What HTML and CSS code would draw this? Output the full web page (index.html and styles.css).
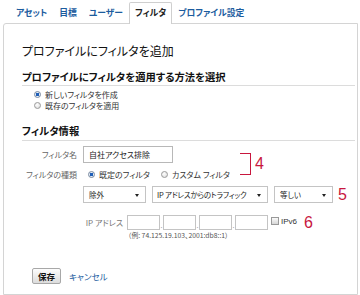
FILE: index.html
```html
<!DOCTYPE html>
<html lang="ja">
<head>
    <meta charset="UTF-8">
    <meta name="viewport" content="width=device-width, initial-scale=1.0">
    <title>プロファイルにフィルタを追加</title>
    <link rel="stylesheet" href="styles.css">
</head>
<body>
    <div class="tabs">
        <a class="tab">アセット</a>
        <a class="tab">目標</a>
        <a class="tab">ユーザー</a>
        <a class="tab active">フィルタ</a>
        <a class="tab">プロファイル設定</a>
    </div>

    <div class="panel">
        <h1 class="title">プロファイルにフィルタを追加</h1>

        <h2 class="section">プロファイルにフィルタを適用する方法を選択</h2>
        <div class="radio-list">
            <div class="radio-row"><span class="radio checked"></span>新しいフィルタを作成</div>
            <div class="radio-row"><span class="radio"></span>既存のフィルタを適用</div>
        </div>

        <h2 class="section second">フィルタ情報</h2>
        <div class="form">
            <div class="row name-row">
                <div class="label">フィルタ名</div>
                <div class="textbox name-box">自社アクセス排除</div>
            </div>
            <div class="row type-row">
                <div class="label">フィルタの種類</div>
                <div class="type-options">
                    <span class="radio checked"></span>既定のフィルタ
                    <span class="radio gap"></span>カスタム フィルタ
                </div>
            </div>
            <div class="bracket"></div>
            <div class="mark mark-4">4</div>
            <div class="row select-row">
                <div class="label"></div>
                <div class="select sel-type"><span>除外</span><i class="arrow"></i></div>
                <div class="select sel-field"><span>IP アドレスからのトラフィック</span><i class="arrow"></i></div>
                <div class="select sel-match"><span>等しい</span><i class="arrow"></i></div>
                <div class="mark">5</div>
            </div>
            <div class="row ip-row">
                <div class="label"></div>
                <div class="ip-label">IP アドレス</div>
                <div class="ip-box"></div><span class="dot">.</span>
                <div class="ip-box"></div><span class="dot">.</span>
                <div class="ip-box"></div><span class="dot">.</span>
                <div class="ip-box"></div>
                <span class="checkbox"></span><span class="ipv6">IPv6</span>
                <div class="mark mark-6">6</div>
            </div>
            <div class="example">（例: 74.125.19.103、2001:db8::1）</div>
        </div>

        <div class="actions">
            <button class="save">保存</button>
            <a class="cancel">キャンセル</a>
        </div>
    </div>
</body>
</html>
```

FILE: styles.css
```css
body {
    margin: 0;
    background-color: #fff;
    font-family: "Noto Sans CJK JP", "Liberation Sans", sans-serif;
    font-feature-settings: "palt";
    color: #222;
}
.tabs {
    display: flex;
    align-items: flex-end;
    height: 23px;
    padding-left: 10px;
}
.tab {
    padding: 0 5px;
    height: 20px;
    line-height: 20px;
    font-size: 8.8px;
    font-weight: bold;
    color: #1c5c9e;
    border: 1px solid transparent;
    border-bottom: none;
}
.tab.active {
    background-color: #fff;
    border-color: #cfcfcf;
    border-radius: 2px 2px 0 0;
    color: #222;
    position: relative;
    margin-bottom: -1px;
    height: 21px;
}
.panel {
    box-sizing: border-box;
    margin: 0 2px 0 3px;
    height: 272px;
    border: 1px solid #d4d4d4;
    border-radius: 3px 0 0 0;
    padding: 19px 2px 0 18px;
}
.title {
    margin: 0;
    font-size: 12px;
    line-height: 16px;
    font-weight: normal;
    color: #111;
}
.section {
    margin: 11px 0 0;
    padding-bottom: 1px;
    font-size: 10.3px;
    line-height: 14px;
    font-weight: bold;
    color: #111;
    border-bottom: 1px solid #dcdcdc;
}
.section.second {
    margin-top: 13px;
    padding-bottom: 2px;
}
.radio-list {
    margin-top: 3px;
    padding-left: 12px;
}
.radio-row {
    display: flex;
    align-items: center;
    height: 11px;
    font-size: 8px;
    color: #333;
}
.radio {
    display: inline-block;
    box-sizing: border-box;
    width: 7px;
    height: 7px;
    margin-right: 4px;
    border: 1px solid #9a9a9a;
    border-radius: 50%;
    background: radial-gradient(circle at 40% 35%, #fff, #d8d8d8);
}
.radio.checked {
    background: radial-gradient(circle, #1f5fb8 0, #1f5fb8 1.5px, #e4ecf6 2px, #cfd8e4 100%);
    border-color: #7a8aa0;
}
.form {
    position: relative;
    margin-top: 5px;
}
.row {
    display: flex;
    align-items: center;
}
.label {
    width: 55px;
    margin-right: 6px;
    text-align: right;
    font-size: 8px;
    color: #666;
    flex-shrink: 0;
}
.name-row {
    height: 17px;
}
.textbox {
    box-sizing: border-box;
    height: 17px;
    border: 1px solid #b8b8b8;
    background-color: #fff;
    font-size: 8px;
    line-height: 15px;
    padding-left: 5px;
    color: #222;
}
.name-box {
    width: 90px;
}
.type-row {
    margin-top: 4px;
    height: 14px;
}
.type-options {
    display: flex;
    align-items: center;
    padding-left: 5px;
    font-size: 8px;
    color: #333;
}
.type-options .radio.gap {
    margin-left: 11px;
}
.bracket {
    position: absolute;
    left: 218px;
    top: 7px;
    width: 10px;
    height: 20px;
    border: 1.5px solid #c8173e;
    border-left: none;
}
.mark {
    font-family: "Liberation Sans", sans-serif;
    font-size: 16px;
    line-height: 16px;
    color: #c8173e;
    margin-left: 5px;
}
.mark-4 {
    position: absolute;
    left: 228px;
    top: 10px;
    margin-left: 5px;
}
.select-row {
    margin-top: 5px;
    height: 17px;
}
.select {
    box-sizing: border-box;
    display: flex;
    align-items: center;
    justify-content: space-between;
    height: 17px;
    padding: 0 6px 0 5px;
    margin-right: 6px;
    border: 1px solid #c4c4c4;
    background-color: #fff;
    font-size: 7.5px;
    color: #222;
    white-space: nowrap;
}
.sel-type {
    width: 63px;
}
.sel-field {
    width: 116px;
    padding-left: 4px;
    letter-spacing: -0.2px;
}
.sel-match {
    width: 59px;
    margin-right: 0;
}
.arrow {
    width: 0;
    height: 0;
    border-left: 2.5px solid transparent;
    border-right: 2.5px solid transparent;
    border-top: 3px solid #222;
    margin-top: 2px;
}
.ip-row {
    margin-top: 12px;
    height: 15px;
}
.ip-label {
    width: 40px;
    margin-right: 4px;
    text-align: right;
    font-size: 8px;
    color: #777;
    flex-shrink: 0;
}
.ip-box {
    box-sizing: border-box;
    width: 33px;
    height: 15px;
    border: 1px solid #c4c4c4;
}
.dot {
    width: 3px;
    align-self: flex-end;
    font-size: 7px;
    line-height: 9px;
    color: #999;
    text-align: center;
}
.checkbox {
    box-sizing: border-box;
    width: 8px;
    height: 8px;
    margin-left: 3px;
    margin-bottom: 4px;
    border: 1px solid #999;
    background: linear-gradient(#fafafa, #d6d6d6);
}
.ipv6 {
    margin-left: 2px;
    margin-bottom: 3px;
    font-family: "Liberation Sans", sans-serif;
    font-size: 8px;
    color: #333;
}
.mark-6 {
    margin-left: 7px;
}
.example {
    margin: 1px 0 0 106px;
    font-size: 6.8px;
    line-height: 9px;
    color: #555;
}
.actions {
    display: flex;
    align-items: center;
    margin-top: 28px;
    padding-left: 10px;
}
.save {
    box-sizing: border-box;
    width: 29px;
    height: 16px;
    padding: 0;
    border: 1px solid #a8a8a8;
    border-radius: 2px;
    background: linear-gradient(#fdfdfd, #dcdcdc);
    font-family: inherit;
    font-size: 8.5px;
    font-weight: bold;
    color: #111;
}
.cancel {
    margin-left: 8px;
    font-size: 8.5px;
    color: #1c5c9e;
}
```
